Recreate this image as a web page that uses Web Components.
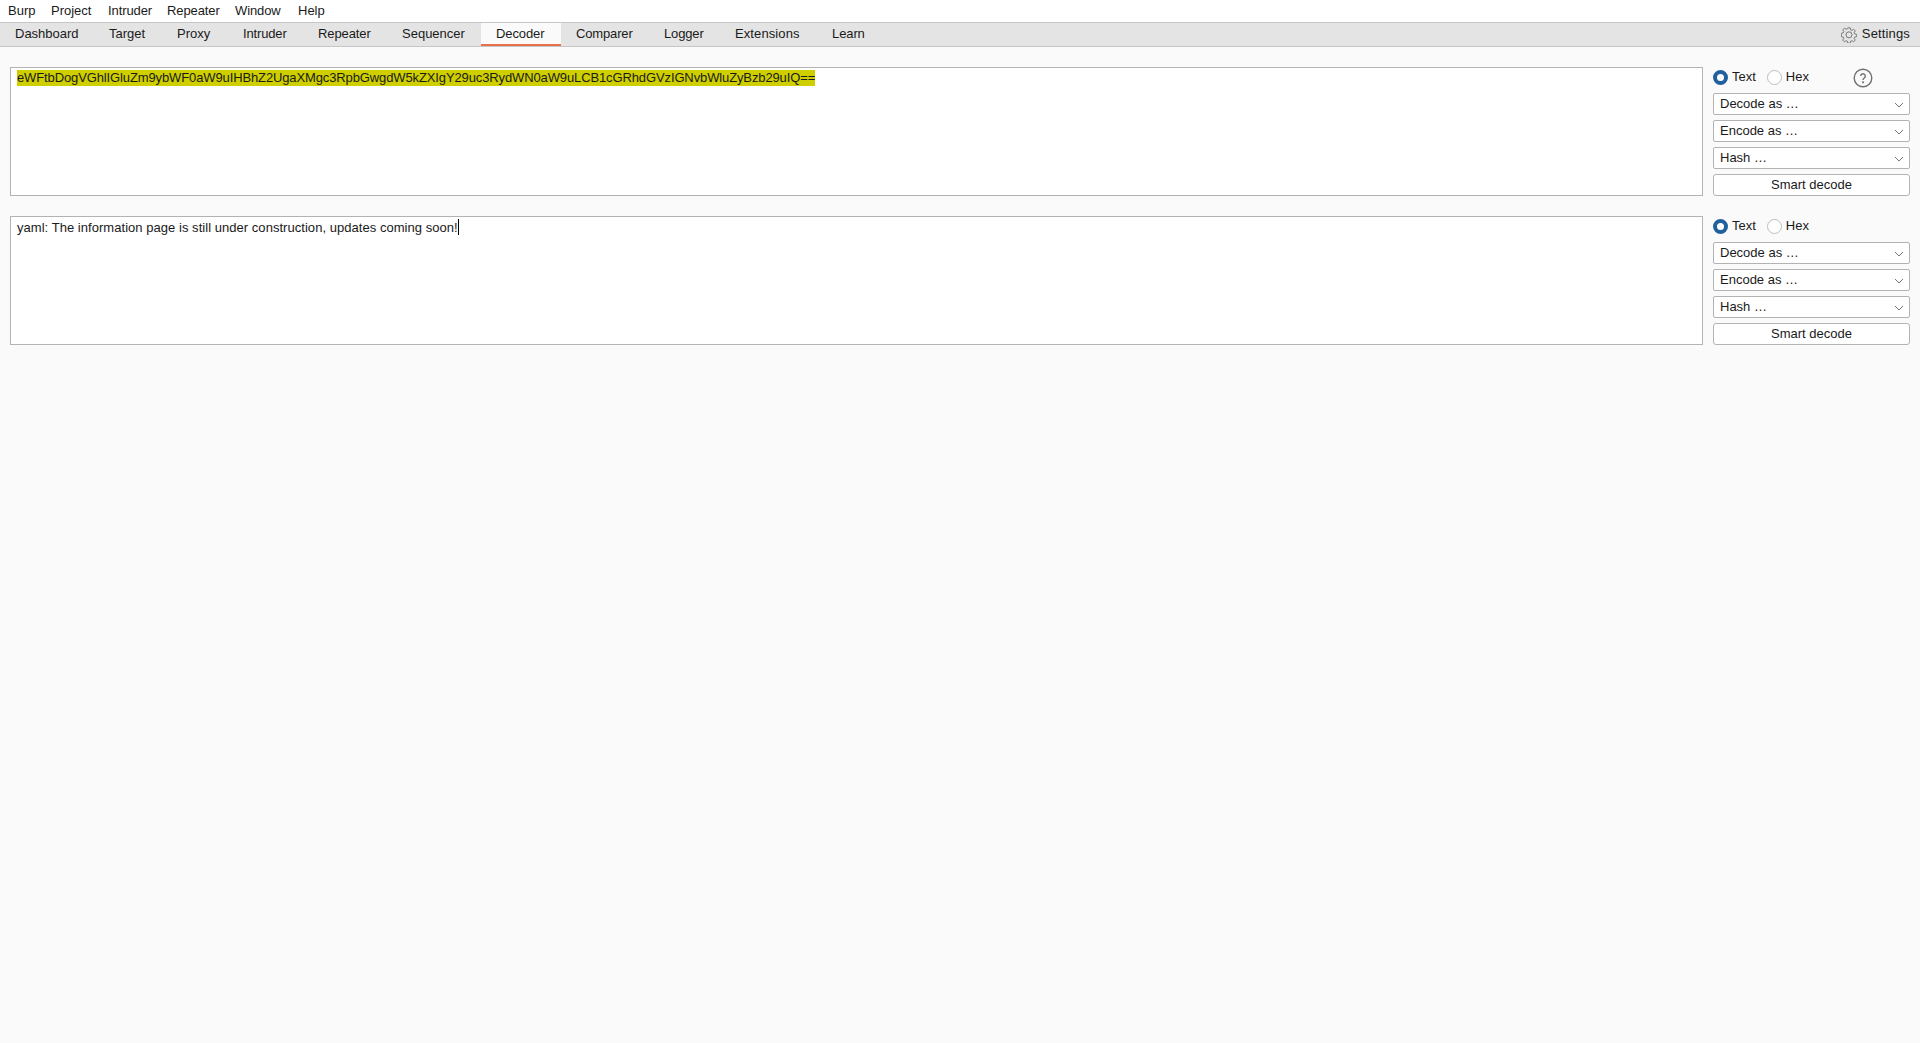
<!DOCTYPE html>
<html lang="en">
<head>
<meta charset="utf-8">
<title>Burp Suite Decoder</title>
<style>
html,body{margin:0;padding:0;height:100%}
body{background:#fafafa;color:#1a1a1a;font:13px/16px "Liberation Sans",Arial,sans-serif;display:flex;flex-direction:column;height:1043px;overflow:hidden}
</style>
</head>
<body>
<burp-menubar><span style="width:43px">Burp</span><span style="width:57px">Project</span><span style="width:59px;letter-spacing:-.1px">Intruder</span><span style="width:68px;letter-spacing:-.1px">Repeater</span><span style="width:63px;letter-spacing:-.1px">Window</span><span>Help</span></burp-menubar>
<burp-tabs>
  <burp-tab style="--w:94px">Dashboard</burp-tab><burp-tab style="--w:68px">Target</burp-tab><burp-tab style="--w:66px">Proxy</burp-tab><burp-tab style="--w:75px;--ls:-.15px">Intruder</burp-tab><burp-tab style="--w:84px;--ls:-.1px">Repeater</burp-tab><burp-tab style="--w:94px">Sequencer</burp-tab><burp-tab style="--w:80px;--ls:-.1px" active>Decoder</burp-tab><burp-tab style="--w:88px;--ls:-.15px">Comparer</burp-tab><burp-tab style="--w:71px;--ls:-.15px">Logger</burp-tab><burp-tab style="--w:97px;--ls:.1px">Extensions</burp-tab><burp-tab style="--w:64px;--ls:-.1px">Learn</burp-tab>
</burp-tabs>
<decoder-page>
  <decoder-row help><mark slot="text">eWFtbDogVGhlIGluZm9ybWF0aW9uIHBhZ2UgaXMgc3RpbGwgdW5kZXIgY29uc3RydWN0aW9uLCB1cGRhdGVzIGNvbWluZyBzb29uIQ==</mark></decoder-row>
  <decoder-row caret><span slot="text" style="letter-spacing:.04px">yaml: The information page is still under construction, updates coming soon!</span></decoder-row>
</decoder-page>
<script>
function def(name, html, setup){
  customElements.define(name, class extends HTMLElement{
    constructor(){super();const r=this.attachShadow({mode:'open'});r.innerHTML=html;}
    connectedCallback(){ if(setup) setup(this); }
  });
}
def('burp-menubar',`<style>
:host{display:flex;flex:none;height:22px;background:#fff;align-items:center;padding-left:8px;font-size:13px}
::slotted(span){line-height:21px;display:block;position:relative;top:-1px;white-space:nowrap}
</style><slot></slot>`);
def('burp-tabs',`<style>
:host{display:flex;flex:none;height:23px;background:#e4e4e4;border-top:1px solid #c6c6c6;border-bottom:1px solid #c6c6c6;align-items:stretch}
.s{margin-left:auto;display:flex;align-items:center;gap:5px;padding-right:10px;letter-spacing:.15px}
.s span{margin-bottom:1px}
svg{display:block}
</style><slot></slot><div class="s"><svg width="16" height="16" viewBox="0 0 18 18" fill="none" stroke="#777" stroke-width="1.1"><path d="M7.6 1.2h2.8l.4 2.2 1.5.6 1.8-1.3 2 2-1.3 1.8.6 1.5 2.2.4v2.8l-2.2.4-.6 1.5 1.3 1.8-2 2-1.8-1.3-1.5.6-.4 2.2H7.6l-.4-2.2-1.5-.6-1.8 1.3-2-2 1.3-1.8-.6-1.5-2.2-.4V7.2l2.2-.4.6-1.5-1.3-1.8 2-2 1.8 1.3 1.5-.6z" transform="translate(0 -.2)"/><circle cx="9" cy="8.8" r="3.4"/></svg><span>Settings</span></div>`);
def('burp-tab',`<style>
:host{display:flex;flex:0 0 var(--w);box-sizing:border-box;align-items:center;padding:0 0 1px 15px;white-space:nowrap;letter-spacing:var(--ls,0)}
:host([active]){background:#fafafa;box-shadow:inset 0 -2px 0 #e8704a}
</style><slot></slot>`);
def('decoder-page',`<style>
:host{display:flex;flex-direction:column;gap:20px;padding:20px 10px 0;flex:1}
</style><slot></slot>`);
def('decoder-row',`<style>
:host{display:flex;gap:10px;height:129px}
.t{flex:1;min-width:0;background:#fff;border:1px solid #b3b3b3;box-sizing:border-box;padding:2px 6px;line-height:16px;white-space:pre}
.caret{display:none;width:1px;height:16px;background:#000;vertical-align:-3px}
:host([caret]) .caret{display:inline-block}
::slotted(mark){background:#cfcf00;color:#1a1a1a;letter-spacing:-.12px;display:inline-block;line-height:16px}
.p{flex:none;width:197px;display:flex;flex-direction:column;gap:5px}
.r{height:21px;display:flex;align-items:center;position:relative;top:-1px}
.help{display:none;position:absolute;left:140px;top:2px}
:host([help]) .help{display:block}
</style>
<div class="t"><slot name="text"></slot><span class="caret"></span></div>
<div class="p">
  <div class="r"><burp-radio checked>Text</burp-radio><burp-radio>Hex</burp-radio>
    <svg class="help" width="20" height="20" viewBox="0 0 20 20" fill="none" stroke="#707070" stroke-width="1.4"><circle cx="10" cy="10" r="8.8"/><path d="M7.7 8.1a2.3 2.3 0 1 1 3.6 1.9c-.9.6-1.3 1-1.3 1.9"/><circle cx="10" cy="14.3" r=".4" fill="#707070"/></svg>
  </div>
  <burp-select>Decode as …</burp-select>
  <burp-select>Encode as …</burp-select>
  <burp-select>Hash …</burp-select>
  <burp-button>Smart decode</burp-button>
</div>`);
def('burp-radio',`<style>
:host{display:flex;align-items:center;gap:4px;margin-right:11px}
i{display:block;box-sizing:border-box;width:15px;height:15px;border-radius:50%;background:#fff;border:1px solid #bcbcbc;position:relative;top:1px}
:host([checked]) i{border:4px solid #20609c}
span{display:block}
</style><i></i><span><slot></slot></span>`);
def('burp-select',`<style>
:host{display:flex;align-items:center;justify-content:space-between;height:22px;box-sizing:border-box;background:#fff;border:1px solid #b3b3b3;border-radius:2px;padding:0 5px 0 6px}
svg{display:block;position:relative;top:1px}
</style><span><slot></slot></span><svg width="10" height="6" viewBox="0 0 10 6" fill="none" stroke="#777" stroke-width="1"><path d="M1 1l4 4 4-4"/></svg>`);
def('burp-button',`<style>
:host{display:flex;align-items:center;justify-content:center;height:22px;box-sizing:border-box;background:#fff;border:1px solid #b3b3b3;border-radius:3px}
</style><slot></slot>`);
</script>
</body>
</html>
